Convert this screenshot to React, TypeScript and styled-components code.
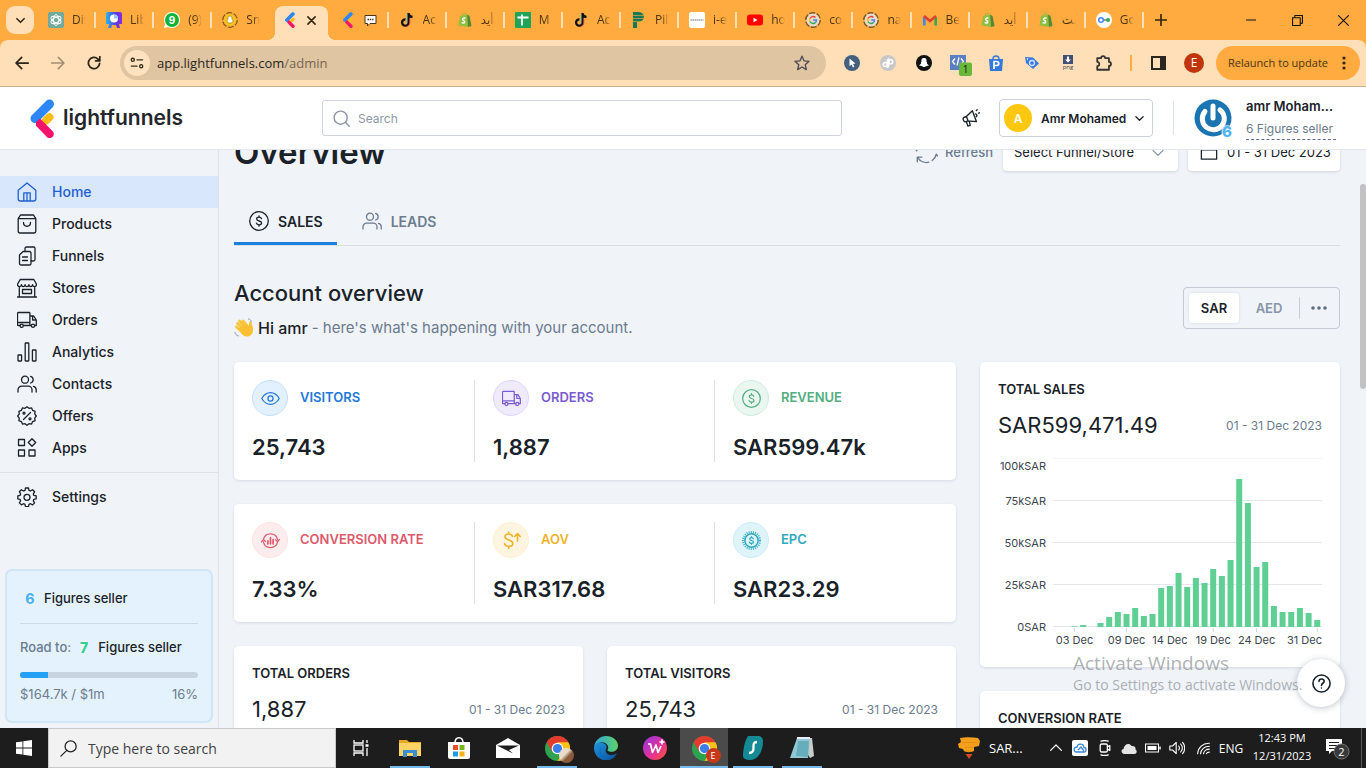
import React from "react";
import styled, { createGlobalStyle, css } from "styled-components";

const uiFont = `Inter, "Liberation Sans", sans-serif`;
const osFont = `"Open Sans", "Noto Sans", "DejaVu Sans", sans-serif`;

const ink = "#1a2229";
const slate = "#6b7c8f";
const line = "#dde2e9";

const GlobalStyle = createGlobalStyle`
  *, *::before, *::after { box-sizing: border-box; }
  html, body { margin: 0; padding: 0; overflow: hidden; }
  body { font-family: ${uiFont}; color: ${ink}; background: #f0f3f8; }
  button, input, select { font: inherit; color: inherit; margin: 0; }
  button { border: 0; background: none; padding: 0; cursor: pointer; }
  a { color: inherit; text-decoration: none; }
  h1, h2, h3, p, ul { margin: 0; padding: 0; }
  ul { list-style: none; }
  svg { display: block; flex: none; }
`;

const Desktop = styled.div`
  position: relative;
  height: 100vh;
  display: flex;
  flex-direction: column;
  overflow: hidden;
`;

/* ---------- Browser chrome ---------- */

const TabStrip = styled.div`
  height: 40px;
  flex: none;
  display: flex;
  align-items: flex-end;
  background: #ffab40;
  font-family: ${osFont};
`;

const TabSearch = styled.button`
  flex: none;
  width: 28px;
  height: 28px;
  margin: 0 4px 6px 6px;
  border-radius: 9px;
  background: #ffdfb8;
  display: grid;
  place-items: center;
`;

const Tabs = styled.ul`
  flex: 1;
  min-width: 0;
  display: flex;
`;

const Tab = styled.li<{ $active?: boolean; $line?: boolean }>`
  position: relative;
  flex: 1 1 0;
  min-width: 0;
  height: 34px;
  padding: 0 10px 6px;
  display: flex;
  align-items: center;
  gap: 8px;
  border-radius: 8px 8px 0 0;
  ${(p) =>
    p.$line &&
    css`
      &::after {
        content: "";
        position: absolute;
        right: 0;
        top: 6px;
        width: 2px;
        height: 16px;
        background: #ffdfb8;
      }
    `}
  ${(p) =>
    p.$active &&
    css`
      flex: 0 0 53px;
      margin: 0 2px 0 5px;
      gap: 12px;
      background: #ffdfb8;
      &::before,
      &::after {
        content: "";
        position: absolute;
        bottom: 0;
        width: 8px;
        height: 8px;
      }
      &::before {
        left: -8px;
        background: radial-gradient(circle at 0 0, transparent 8px, #ffdfb8 8px);
      }
      &::after {
        right: -8px;
        background: radial-gradient(circle at 100% 0, transparent 8px, #ffdfb8 8px);
      }
    `}
`;

const TabTitle = styled.span`
  width: 14px;
  flex: none;
  overflow: hidden;
  white-space: nowrap;
  font-size: 12px;
  line-height: 18px;
  color: #4a3413;
  mask-image: linear-gradient(to right, #000 50%, transparent);
`;

const StripButton = styled.button<{ $w: number }>`
  flex: none;
  width: ${(p) => p.$w}px;
  height: 40px;
  display: grid;
  place-items: center;
`;

const WindowControls = styled.div`
  display: flex;
  margin-left: 50px;
`;

const ToolbarBack = styled.div`
  flex: none;
  background: #ffab40;
`;

const Toolbar = styled.div`
  height: 47px;
  display: flex;
  align-items: center;
  padding: 0 6px 1px 4px;
  background: #ffdfb8;
  border-bottom: 1px solid #c9b18f;
  border-radius: 8px 8px 0 0;
  font-family: ${osFont};
`;

const ToolButton = styled.button`
  flex: none;
  width: 36px;
  height: 34px;
  display: grid;
  place-items: center;
`;

const Omnibox = styled.div`
  flex: 1;
  min-width: 0;
  height: 34px;
  margin: 0 8px;
  padding: 0 16px 0 4px;
  display: flex;
  align-items: center;
  gap: 7px;
  border-radius: 17px;
  background: #dfc5a1;
`;

const SiteInfo = styled.button`
  width: 26px;
  height: 26px;
  border-radius: 50%;
  background: #ffe2bf;
  display: grid;
  place-items: center;
`;

const Url = styled.span`
  flex: 1;
  font-size: 13px;
  line-height: 20px;
  color: #2b2620;
  span {
    color: #75664f;
  }
`;

const ToolDivider = styled.span`
  flex: none;
  width: 2px;
  height: 16px;
  margin: 0 8px;
  background: #ffab40;
`;

const Relaunch = styled.button`
  flex: none;
  height: 34px;
  width: 144px;
  margin-left: 4px;
  padding: 0 14px 0 12px;
  display: flex;
  align-items: center;
  justify-content: space-between;
  border-radius: 17px;
  background: #ffab40;
  font-size: 11px;
  white-space: nowrap;
  color: #4a3413;
`;

/* ---------- App header ---------- */

const Header = styled.header`
  flex: none;
  height: 63px;
  display: flex;
  align-items: center;
  padding: 0 30px;
  background: #fff;
  border-bottom: 1px solid #e2e6ed;
`;

const Logo = styled.a`
  flex: none;
  width: 292px;
  display: flex;
  align-items: center;
  gap: 8px;
  font-size: 21px;
  font-weight: 600;
  line-height: 28px;
  color: #25262b;
`;

const SearchBox = styled.label`
  flex: 0 1 520px;
  height: 36px;
  display: flex;
  align-items: center;
  gap: 6px;
  padding: 0 10px;
  border: 1px solid #cfd3da;
  border-radius: 3px;
  input {
    flex: 1;
    min-width: 0;
    border: 0;
    outline: 0;
    background: none;
    font-size: 12px;
  }
  input::placeholder {
    color: #8d97a8;
    opacity: 1;
  }
`;

const HeaderRight = styled.div`
  flex: none;
  margin-left: auto;
  display: flex;
  align-items: center;
`;

const AnnounceButton = styled.button`
  width: 22px;
  height: 22px;
  display: grid;
  place-items: center;
`;

const AccountButton = styled.button`
  height: 38px;
  width: 154px;
  margin-left: 17px;
  padding: 0 10px 0 4px;
  display: flex;
  align-items: center;
  gap: 9px;
  border: 1px solid #ced3da;
  border-radius: 4px;
  font-size: 12px;
  font-weight: 600;
  white-space: nowrap;
  svg {
    margin-left: auto;
  }
`;

const Initial = styled.span<{ $size: number; $bg: string }>`
  flex: none;
  width: ${(p) => p.$size}px;
  height: ${(p) => p.$size}px;
  border-radius: 50%;
  background: ${(p) => p.$bg};
  color: #fff;
  font-size: 12px;
  display: grid;
  place-items: center;
`;

const HeaderDivider = styled.span`
  width: 1px;
  height: 34px;
  margin: 0 20px;
  background: ${line};
`;

const AvatarWrap = styled.div`
  position: relative;
  width: 38px;
  height: 38px;
`;

const AvatarBadge = styled.span`
  position: absolute;
  right: 0;
  bottom: -4px;
  font-size: 15px;
  line-height: 18px;
  font-weight: 800;
  color: #4db5f5;
  text-shadow: 0 0 2px #fff, 0 0 2px #fff, 0 0 2px #fff;
`;

const Person = styled.div`
  width: 90px;
  margin-left: 14px;
`;

const PersonName = styled.p`
  font-size: 13px;
  font-weight: 600;
  line-height: 18px;
  white-space: nowrap;
`;

const PersonPlan = styled.a`
  display: block;
  margin-top: 4px;
  font-size: 12px;
  line-height: 20px;
  color: ${slate};
  white-space: nowrap;
  border-bottom: 1px dashed #5d6d92;
`;

/* ---------- Sidebar ---------- */

const Body = styled.div`
  position: relative;
  flex: 1;
  min-height: 0;
  display: flex;
  background: #f0f3f8;
`;

const Sidebar = styled.aside`
  flex: none;
  width: 219px;
  padding-top: 26px;
  display: flex;
  flex-direction: column;
  border-right: 1px solid ${line};
`;

const NavLink = styled.a<{ $active?: boolean }>`
  height: 32px;
  padding-left: 17px;
  display: flex;
  align-items: center;
  gap: 15px;
  font-size: 14px;
  font-weight: 500;
  color: ${(p) => (p.$active ? "#1f5fd0" : ink)};
  background: ${(p) => (p.$active ? "#d8e7fb" : "none")};
`;

const Label = styled.span`
  padding-bottom: 2px;
`;

const NavRule = styled.hr`
  width: 100%;
  margin: 8px 0;
  border: 0;
  border-top: 1px solid ${line};
`;

const PlanCard = styled.section`
  margin: auto 5px 5px;
  height: 154px;
  padding: 17px 13px 0;
  border: 2px solid #cfe6f6;
  border-radius: 7px;
  background: #e3f2fd;
  font-size: 13px;
`;

const PlanRow = styled.div`
  display: flex;
  align-items: center;
  height: 20px;
  font-weight: 500;
  color: ${ink};
  white-space: nowrap;
  span {
    color: ${slate};
  }
`;

const PlanRule = styled.hr`
  margin: 15px 0 13px;
  border: 0;
  border-top: 1px solid #c9dae8;
`;

const Digit = styled.b<{ $color: string; $left?: number }>`
  flex: none;
  width: 20px;
  margin: 0 4px 0 ${(p) => p.$left ?? 0}px;
  text-align: center;
  font-size: 14px;
  font-weight: 800;
  color: ${(p) => p.$color};
  text-shadow: 0 0 3px #fff;
`;

const Meter = styled.div`
  height: 6px;
  margin: 15px 0 6px;
  border-radius: 3px;
  background: #c8d5e0;
  overflow: hidden;
`;

const MeterFill = styled.div`
  height: 100%;
  background: #24a1f4;
`;

const PlanFoot = styled.div`
  display: flex;
  justify-content: space-between;
  line-height: 20px;
  color: ${slate};
`;

/* ---------- Main column ---------- */

const Main = styled.main`
  flex: 1;
  min-width: 0;
  padding: 0 26px 0 15px;
  overflow: hidden;
`;

const TitleRow = styled.div`
  height: 38px;
  margin-top: -17px;
  display: flex;
  align-items: center;
  gap: 10px;
  h1 {
    flex: 1;
    font-size: 33px;
    line-height: 38px;
    font-weight: 600;
  }
`;

const RefreshButton = styled.button`
  display: flex;
  align-items: center;
  gap: 7px;
  font-size: 13px;
  font-weight: 500;
  color: ${slate};
`;

const raised = css`
  background: #fff;
  border-radius: 4px;
  box-shadow: 0 1px 3px rgba(40, 55, 80, 0.16);
`;

const StorePicker = styled.label`
  ${raised}
  position: relative;
  width: 175px;
  height: 38px;
  select {
    width: 100%;
    height: 38px;
    padding: 0 11px;
    border: 0;
    background: none;
    appearance: none;
    font-size: 13px;
  }
  svg {
    position: absolute;
    right: 14px;
    top: 14px;
    pointer-events: none;
  }
`;

const DateButton = styled.button`
  ${raised}
  width: 152px;
  height: 38px;
  padding: 0 12px;
  display: flex;
  align-items: center;
  gap: 9px;
  font-size: 13px;
  white-space: nowrap;
`;

const ViewTabs = styled.div`
  margin-top: 29px;
  display: flex;
  gap: 10px;
  border-bottom: 1px solid #d9dfe6;
`;

const ViewTab = styled.button<{ $active?: boolean }>`
  height: 45px;
  padding: 0 14px 0 15px;
  display: flex;
  align-items: center;
  gap: 9px;
  font-size: 14px;
  font-weight: 600;
  border-bottom: 3px solid ${(p) => (p.$active ? "#1b7fe0" : "transparent")};
  color: ${(p) => (p.$active ? ink : slate)};
`;

const IntroRow = styled.div`
  margin: 32px 0 24px;
  display: flex;
  align-items: center;
  justify-content: space-between;
`;

const IntroTitle = styled.h2`
  font-size: 22px;
  font-weight: 500;
  line-height: 30px;
`;

const Greeting = styled.p`
  margin-top: 10px;
  display: flex;
  align-items: center;
  gap: 4px;
  font-size: 15px;
  line-height: 20px;
  color: ${slate};
  strong {
    font-size: 16px;
    font-weight: 500;
    color: ${ink};
  }
`;

const Currency = styled.div`
  height: 42px;
  width: 157px;
  padding: 5px 1px 5px 5px;
  display: flex;
  align-items: center;
  border: 1px solid #c3cad3;
  border-radius: 4px;
`;

const CurrencyButton = styled.button<{ $active?: boolean }>`
  width: ${(p) => (p.$active ? 50 : 60)}px;
  height: 30px;
  padding-bottom: 1px;
  border-radius: 4px;
  font-size: 13px;
  font-weight: 600;
  color: ${(p) => (p.$active ? ink : "#8795a6")};
  background: ${(p) => (p.$active ? "#fff" : "none")};
  box-shadow: ${(p) => (p.$active ? "0 0 3px rgba(40,55,80,.12)" : "none")};
`;

const MoreButton = styled.button`
  flex: 1;
  height: 22px;
  display: grid;
  place-items: center;
  border-left: 1px solid #c6cdd6;
`;

const Board = styled.div`
  display: grid;
  grid-template-columns: minmax(0, 1fr) 360px;
  gap: 24px;
  align-items: start;
`;

const Column = styled.div`
  display: grid;
  gap: 24px;
`;

const Pair = styled.div`
  display: grid;
  grid-template-columns: 1fr 1fr;
  gap: 24px;
`;

const Card = styled.section`
  background: #fff;
  border-radius: 5px;
  box-shadow: 0 1px 3px rgba(40, 55, 80, 0.13);
  padding: 18px;
  min-height: 118px;
`;

const StatCard = styled(Card)`
  display: grid;
  grid-template-columns: repeat(3, 1fr);
  padding: 18px 2px 18px 0;
`;

const Stat = styled.div`
  padding-left: 18px;
  & + & {
    border-left: 1px solid #dce0e5;
  }
`;

const StatHead = styled.h3<{ $color: string }>`
  display: flex;
  align-items: center;
  gap: 12px;
  font-size: 13px;
  font-weight: 600;
  color: ${(p) => p.$color};
`;

const StatIcon = styled.span<{ $bg: string; $edge: string }>`
  width: 36px;
  height: 36px;
  border-radius: 50%;
  display: grid;
  place-items: center;
  background: ${(p) => p.$bg};
  border: 1px solid ${(p) => p.$edge};
`;

const StatValue = styled.p`
  margin-top: 16px;
  font-size: 22px;
  line-height: 30px;
  font-weight: 600;
`;

const CardTitle = styled.h3`
  font-size: 13px;
  line-height: 18px;
  font-weight: 600;
`;

const CardFigures = styled.div`
  margin-top: 12px;
  display: flex;
  align-items: center;
  justify-content: space-between;
  font-size: 12px;
  color: ${slate};
  strong {
    font-size: 22px;
    line-height: 30px;
    font-weight: 400;
    color: ${ink};
  }
`;

const Chart = styled.svg`
  width: 100%;
  margin-top: 10px;
  font-size: 11px;
  fill: #3c4650;
`;

const ScrollThumb = styled.div`
  position: absolute;
  right: 0;
  top: 34px;
  width: 6px;
  height: 205px;
  border-radius: 3px;
  background: #c0c2c4;
`;

const Watermark = styled.div`
  position: absolute;
  right: 57px;
  bottom: 33px;
  width: 236px;
  font-family: ${osFont};
  color: rgba(140, 143, 150, 0.7);
  pointer-events: none;
  white-space: nowrap;
  p {
    font-size: 19px;
    line-height: 24px;
  }
  p + p {
    font-size: 14px;
    line-height: 20px;
  }
`;

const HelpButton = styled.button`
  position: absolute;
  right: 21px;
  bottom: 21px;
  width: 48px;
  height: 48px;
  border-radius: 50%;
  background: #fff;
  box-shadow: 0 1px 6px rgba(40, 55, 80, 0.3);
  display: grid;
  place-items: center;
`;

/* ---------- Taskbar ---------- */

const Taskbar = styled.footer`
  flex: none;
  height: 40px;
  display: flex;
  background: #1d1d1d;
  color: #fff;
  font-family: ${osFont};
`;

const StartButton = styled.button`
  width: 48px;
  display: grid;
  place-items: center;
`;

const TaskSearch = styled.label`
  width: 288px;
  padding-left: 11px;
  display: flex;
  align-items: center;
  gap: 9px;
  background: #f2f2f2;
  border: 1px solid #c9c9c9;
  input {
    flex: 1;
    min-width: 0;
    border: 0;
    outline: 0;
    background: none;
    font-size: 14px;
  }
  input::placeholder {
    color: #424242;
    opacity: 1;
  }
`;

const TaskApps = styled.div`
  display: flex;
  gap: 1px;
  padding-left: 1px;
`;

const TaskButton = styled.button<{ $active?: boolean; $running?: boolean }>`
  position: relative;
  width: 48px;
  display: grid;
  place-items: center;
  background: ${(p) => (p.$active ? "#4b4b4b" : "none")};
  &::after {
    content: "";
    position: absolute;
    bottom: 0;
    left: ${(p) => (p.$active ? 0 : 4)}px;
    right: ${(p) => (p.$active ? 0 : 4)}px;
    height: 2px;
    background: ${(p) => (p.$running ? "#76b9ed" : "none")};
  }
`;

const Tray = styled.div`
  margin-left: auto;
  display: flex;
  align-items: center;
  font-size: 12px;
`;

const NewsButton = styled.button`
  width: 88px;
  display: flex;
  align-items: center;
  gap: 8px;
  font-size: 13px;
`;

const TrayIcon = styled.button<{ $w?: number }>`
  width: ${(p) => p.$w ?? 24}px;
  height: 40px;
  display: grid;
  place-items: center;
`;

const Clock = styled.time`
  width: 74px;
  text-align: center;
  font-size: 11px;
  line-height: 18px;
  padding-bottom: 2px;
`;

const ShowDesktop = styled.span`
  width: 5px;
  height: 40px;
  border-left: 1px solid #5b5b5b;
`;

/* ---------- Drawings ---------- */

type IconProps = { s?: number; w?: number; color?: string; children?: React.ReactNode };

const Icon = ({ s = 20, w = 1.3, color = "currentColor", children }: IconProps) => (
  <svg
    width={s}
    height={s}
    viewBox="0 0 20 20"
    fill="none"
    stroke={color}
    strokeWidth={w}
    strokeLinecap="round"
    strokeLinejoin="round"
    aria-hidden="true"
  >
    {children}
  </svg>
);

const Truck = () => (
  <>
    <path d="M3 15.500H1.200a.7.7 0 0 1-.7-.7V3.200a.7.7 0 0 1 .7-.7h11a.7.7 0 0 1 .7.7v12.300H6.500M.5 12.500h12.400M12.900 6h3.800l2.600 4v5.500h-1.500M14.300 15.500h-1.400M15.600 6v4h3.700" />
    <circle cx="4.700" cy="15.800" r="1.600" />
    <circle cx="16" cy="15.800" r="1.600" />
  </>
);

const Coin = () => (
  <>
    <circle cx="10" cy="10" r="9.300" />
    <path d="M12.500 7.700c-.3-1-1.200-1.500-2.500-1.500s-2.400.6-2.400 1.800c0 2.700 5 1.300 5 4 0 1.200-1.100 1.800-2.500 1.800s-2.400-.5-2.700-1.600M10 4.800v1.400M10 13.800v1.400" />
  </>
);

const People = () => (
  <>
    <circle cx="8" cy="5.700" r="3.500" />
    <path d="M1 18v-2.200c0-2 1.700-3.600 3.700-3.600h6.600c2 0 3.700 1.600 3.700 3.600V18M13.600 2.400c3.400 1 3.400 5.600 0 6.600M16.500 12.400c1.700.4 2.700 1.700 2.700 3.400V18" />
  </>
);

const gear =
  "M8.500 1h3l.5 2.300 1.500.7 2.100-1.300 2 2.100-1.300 2.100.6 1.500 2.300.5v2.900l-2.300.5-.6 1.500 1.300 2.100-2 2-2.100-1.200-1.500.6-.5 2.300h-3L8 17.300l-1.500-.6-2.100 1.200-2-2 1.200-2.100L3 12.300l-2.200-.5V8.900L3 8.400l.6-1.500-1.200-2.100 2-2.100L6.500 4 8 3.300z";

const scallop =
  "M10 .8l2 1.500 2.600-.4 1 2.400 2.500 1-.4 2.500L19.300 10l-1.600 2.100.4 2.500-2.500 1-1 2.500-2.600-.4-2 1.600-2-1.600-2.600.4-1-2.500-2.500-1 .4-2.500L.7 10l1.600-2.200-.4-2.500 2.500-1 1-2.400L8 2.300z";

const navItems: { label: string; icon: React.ReactNode }[] = [
  {
    label: "Home",
    icon: <path d="M1.200 8.200L10 1l8.800 7.200v8.500a2.300 2.300 0 0 1-2.300 2.300h-13a2.300 2.300 0 0 1-2.300-2.300zM6.800 19v-8.200h6.400V19M10 10.800V19" />,
  },
  {
    label: "Products",
    icon: (
      <>
        <path d="M1.200 4.700h17.600v12.500a1.800 1.800 0 0 1-1.800 1.800H3a1.800 1.800 0 0 1-1.800-1.800zM1.200 4.700L3.500 1h13l2.300 3.700" />
        <path d="M6.500 8.500c0 5 7 5 7 0" />
      </>
    ),
  },
  {
    label: "Funnels",
    icon: (
      <>
        <path d="M8 5.500v-3A1.500 1.500 0 0 1 9.500 1h7A1.500 1.500 0 0 1 18 2.500v11a1.500 1.500 0 0 1-1.500 1.500H14" />
        <path d="M6 5.500h6.500A1.500 1.500 0 0 1 14 7v10.500a1.500 1.500 0 0 1-1.500 1.500H4a1.500 1.500 0 0 1-1.500-1.500V9zM5.500 11h5M5.500 14.500h5" />
      </>
    ),
  },
  {
    label: "Stores",
    icon: (
      <>
        <path d="M3.200 1.500h13.600l2.700 4.800c0 3-3.900 3-3.900.3 0 2.700-3.700 2.700-3.700 0 0 2.700-3.800 2.700-3.800 0 0 2.700-3.700 2.700-3.700 0 0 2.700-3.900 2.700-3.900-.3zM2.300 9v10M17.700 9v10M.5 19h19" />
        <rect x="5.500" y="11.500" width="9" height="4" />
      </>
    ),
  },
  { label: "Orders", icon: <Truck /> },
  {
    label: "Analytics",
    icon: (
      <>
        <rect x="1" y="13" width="3.600" height="6" rx=".5" />
        <rect x="8.200" y="1" width="3.600" height="18" rx=".5" />
        <rect x="15.400" y="8" width="3.600" height="11" rx=".5" />
      </>
    ),
  },
  { label: "Contacts", icon: <People /> },
  {
    label: "Offers",
    icon: (
      <>
        <path d={scallop} />
        <path d="M6.500 13.500l7-7" />
        <circle cx="7" cy="7.200" r="1" />
        <circle cx="13" cy="12.800" r="1" />
      </>
    ),
  },
  {
    label: "Apps",
    icon: (
      <>
        <rect x="1.500" y="1.500" width="6" height="6" />
        <rect x="1.500" y="12" width="6" height="6" />
        <rect x="12" y="12" width="6" height="6" />
        <path d="M15 .8l3.700 3.700L15 8.200l-3.700-3.700z" />
      </>
    ),
  },
];

const Chevron = ({ s = 10, color = "currentColor", w = 2.5 }: { s?: number; color?: string; w?: number }) => (
  <Icon s={s} w={w} color={color}>
    <path d="M2 6l8 8 8-8" />
  </Icon>
);

const FunnelMark = ({ w, h }: { w: number; h: number }) => (
  <svg width={w} height={h} viewBox="0 0 24 39" strokeLinecap="round" aria-hidden="true">
    <path d="M4.500 19.500L19 5" stroke="#2f86f6" strokeWidth="9" />
    <path d="M15.500 21.500l3.500-3.300" stroke="#fbbc14" strokeWidth="8" />
    <path d="M5.500 23l4-3.500 12.500 12.400a4 4 0 0 1-5.600 6.100L5.300 26.500z" fill="#f5136c" />
  </svg>
);

const Shopify = () => (
  <svg width="16" height="16" viewBox="0 0 16 16" aria-hidden="true">
    <path d="M3 4l7-1.500L11 15 1.500 13.500z" fill="#8fbf3f" />
    <path d="M10 2.500l2.500 1.500L14.500 14l-3.500 1z" fill="#4f8a34" />
    <path d="M5 4c.3-2 1.600-3.300 3-2.800.8.300 1 1 1 2" fill="none" stroke="#8fbf3f" />
    <path d="M8.500 6.300c-1.600-.7-3-.2-3 1s2.300 1.200 2.200 2.700c-.1 1.200-1.700 1.400-3 .5" fill="none" stroke="#fff" strokeWidth="1.500" />
  </svg>
);

const TikTok = () => (
  <svg width="16" height="16" viewBox="0 0 16 16" fill="none" strokeWidth="2.300" aria-hidden="true">
    <path d="M9.500 1v9.500a3.200 3.200 0 1 1-3-3.200M9.500 1.500c.3 2.200 1.800 3.300 4 3.500" stroke="#111" />
    <path d="M8 2v8.500a2 2 0 0 1-1 2" stroke="#3ad0d8" strokeWidth=".7" />
    <path d="M10.800 6.500v4.500a4 4 0 0 1-3 3.600" stroke="#e8365b" strokeWidth=".8" />
  </svg>
);

const GoogleRing = () => (
  <svg width="16" height="16" viewBox="0 0 16 16" fill="none" aria-hidden="true">
    <circle cx="8" cy="8" r="6.700" fill="#e6dccb" />
    <circle cx="8" cy="8" r="7.300" stroke="#7d5a2a" strokeDasharray="6 1.600" strokeWidth="1.400" />
    <path d="M10.500 5.600A3.500 3.500 0 0 0 5 6.300" stroke="#ea4335" strokeWidth="1.400" />
    <path d="M5 6.300a3.500 3.500 0 0 0 0 3.400" stroke="#fbbc05" strokeWidth="1.400" />
    <path d="M5 9.700a3.500 3.500 0 0 0 5.300.9" stroke="#34a853" strokeWidth="1.400" />
    <path d="M10.300 10.600A3.500 3.500 0 0 0 11.500 8H8.200" stroke="#4285f4" strokeWidth="1.400" />
  </svg>
);

const fav = {
  gpt: (
    <svg width="16" height="16" viewBox="0 0 16 16" aria-hidden="true">
      <rect width="16" height="16" rx="2" fill="#74aa9c" />
      <g fill="none" stroke="#fff" strokeWidth=".9">
        <ellipse cx="8" cy="8" rx="2.600" ry="5.500" />
        <ellipse cx="8" cy="8" rx="2.600" ry="5.500" transform="rotate(60 8 8)" />
        <ellipse cx="8" cy="8" rx="2.600" ry="5.500" transform="rotate(120 8 8)" />
      </g>
    </svg>
  ),
  lil: (
    <svg width="16" height="16" viewBox="0 0 16 16" aria-hidden="true">
      <defs>
        <linearGradient id="lil" x1="0" x2="1">
          <stop stopColor="#24b8e8" />
          <stop offset=".6" stopColor="#5a3be0" />
          <stop offset="1" stopColor="#8a2be0" />
        </linearGradient>
      </defs>
      <path d="M2 0h12a2 2 0 0 1 2 2v10h-3l1 4h-3l-1-3H6l-1 3H2l1-4H0V2a2 2 0 0 1 2-2z" fill="url(#lil)" />
      <circle cx="8" cy="6.500" r="4" fill="#fff" />
      <path d="M8 6.500V2.500a4 4 0 0 1 4 4z" fill="#8fc7ff" />
    </svg>
  ),
  whatsapp: (
    <svg width="16" height="16" viewBox="0 0 16 16" aria-hidden="true">
      <path d="M0 16l1.100-4A8 8 0 1 1 4 14.900z" fill="#fff" />
      <circle cx="8" cy="8" r="7" fill="#12b33d" />
      <text x="8" y="11.500" textAnchor="middle" fontFamily="Inter" fontWeight="700" fontSize="10" fill="#fff">9</text>
    </svg>
  ),
  snap: (
    <svg width="16" height="16" viewBox="0 0 16 16" aria-hidden="true">
      <circle cx="8" cy="8" r="7.300" fill="none" stroke="#7d5a10" strokeDasharray="6 1.600" strokeWidth="1.200" />
      <circle cx="8" cy="8" r="5.800" fill="#f5c518" />
      <path d="M8 4c2.200 0 2 2 2 3.200L11.300 9 9.500 11h-3L4.700 9 6 7.200C6 6 5.800 4 8 4z" fill="#fff" stroke="#8a6a12" strokeWidth=".6" />
    </svg>
  ),
  sheets: (
    <svg width="16" height="16" viewBox="0 0 16 16" aria-hidden="true">
      <rect width="16" height="16" rx="1" fill="#1fa55a" />
      <path d="M2.500 5.500h11M7 2.500v11" stroke="#fff" strokeWidth="1.800" />
    </svg>
  ),
  pil: (
    <svg width="16" height="16" viewBox="0 0 16 16" aria-hidden="true">
      <path d="M2 0h6c6 0 7 9 0 10H6v6H2z" fill="#177a55" />
      <path d="M2 3.500h12M2 6.500h12M2 9.500h9" stroke="#ffab40" strokeWidth=".6" />
    </svg>
  ),
  ie: (
    <svg width="16" height="16" viewBox="0 0 16 16" aria-hidden="true">
      <rect width="16" height="16" rx="2" fill="#fff" />
      <path d="M1.500 8h13" stroke="#9a9ea8" strokeWidth="1.600" strokeDasharray="1.500 .5" />
    </svg>
  ),
  youtube: (
    <svg width="16" height="16" viewBox="0 0 16 16" aria-hidden="true">
      <rect y="2.500" width="16" height="11" rx="3" fill="#f00" />
      <path d="M6.500 5.700l4 2.300-4 2.300z" fill="#fff" />
    </svg>
  ),
  gmail: (
    <svg width="16" height="16" viewBox="0 0 16 16" fill="none" strokeWidth="2.600" aria-hidden="true">
      <path d="M2.300 13.500V5" stroke="#4285f4" />
      <path d="M13.700 13.500V5" stroke="#34a853" />
      <path d="M2 4l6 5 6-5" stroke="#e0402f" />
    </svg>
  ),
  key: (
    <svg width="16" height="16" viewBox="0 0 16 16" aria-hidden="true">
      <circle cx="8" cy="8" r="8" fill="#fff" />
      <circle cx="5" cy="8" r="2.300" fill="none" stroke="#4285f4" strokeWidth="1.500" />
      <path d="M8 8h3" stroke="#777" strokeWidth="1.500" />
      <circle cx="12" cy="8" r="2" fill="#34a853" />
    </svg>
  ),
};

const tabs: { icon: React.ReactNode; title: string; line?: boolean }[] = [
  { icon: fav.gpt, title: "Dis", line: true },
  { icon: fav.lil, title: "Lib", line: true },
  { icon: fav.whatsapp, title: "(9)", line: true },
  { icon: fav.snap, title: "Sn" },
];

const tabsAfter: { icon: React.ReactNode; title: string }[] = [
  { icon: <TikTok />, title: "Ac" },
  { icon: <Shopify />, title: "أيد" },
  { icon: fav.sheets, title: "M" },
  { icon: <TikTok />, title: "Ac" },
  { icon: fav.pil, title: "Pil" },
  { icon: fav.ie, title: "i-e" },
  { icon: fav.youtube, title: "ho" },
  { icon: <GoogleRing />, title: "co" },
  { icon: <GoogleRing />, title: "na" },
  { icon: fav.gmail, title: "Be" },
  { icon: <Shopify />, title: "أيد" },
  { icon: <Shopify />, title: "مت" },
  { icon: fav.key, title: "Go" },
];

const extensions: { label: string; icon: React.ReactNode }[] = [
  {
    label: "Pointer",
    icon: (
      <svg width="16" height="16" viewBox="0 0 16 16">
        <circle cx="8" cy="8" r="8" fill="#46607f" />
        <path d="M5.500 3.500l6 5-2.500.4 1.300 2.800-1.400.7-1.300-2.900-2.100 1.700z" fill="#fff" />
      </svg>
    ),
  },
  {
    label: "Link",
    icon: (
      <svg width="16" height="16" viewBox="0 0 16 16">
        <circle cx="8" cy="8" r="8" fill="#c9c8c6" />
        <g fill="none" stroke="#fff" strokeWidth="1.600">
          <circle cx="5.300" cy="9.500" r="2" />
          <path d="M7.300 9.500V6.500c0-2 1-2.500 2-2.500" />
          <circle cx="10.700" cy="6.700" r="2" />
          <path d="M8.700 7v3c0 1.500-1 2.300-2 2.300" />
        </g>
      </svg>
    ),
  },
  {
    label: "Snapchat",
    icon: (
      <svg width="16" height="16" viewBox="0 0 16 16">
        <circle cx="8" cy="8" r="8" fill="#111" />
        <path d="M8 3c2.600 0 2.700 2 2.500 4 .5 0 1 .3.300.9.300 1.200 1 1.700 2 2.100-.3.800-1.200.7-1.500.8-.2.700-1.200.2-1.800.7-.9.700-2.100.7-3 0-.6-.5-1.600 0-1.800-.7-.3-.1-1.200 0-1.500-.8 1-.4 1.700-.9 2-2.100-.7-.6-.2-.9.300-.9-.2-2-.1-4 2.500-4z" fill="#fff" />
      </svg>
    ),
  },
  {
    label: "Code",
    icon: (
      <svg width="26" height="26" viewBox="0 0 26 26">
        <rect x="3" y="5" width="16" height="15" fill="#5b7fc4" />
        <path d="M8 8.500L5.500 11.500 8 14.500M12 7.500l-2 8M14 8.500l2.500 3-2.500 3" fill="none" stroke="#fff" strokeWidth="1.300" />
        <rect x="12" y="12.500" width="13" height="13.500" rx="2" fill="#6ab83a" />
        <text x="18.500" y="23" textAnchor="middle" fontSize="10" fill="#1a1a1a" fontFamily="Open Sans">1</text>
      </svg>
    ),
  },
  {
    label: "Shopping",
    icon: (
      <svg width="16" height="16" viewBox="0 0 16 16">
        <path d="M1 4h14l-1 12H2z" fill="#3478dd" />
        <path d="M5 4c0-4 6-4 6 0" fill="none" stroke="#3478dd" strokeWidth="1.400" />
        <path d="M6 14V6.500h2.500c3 0 3 4 0 4H6" fill="none" stroke="#fff" strokeWidth="1.700" />
      </svg>
    ),
  },
  {
    label: "Tag",
    icon: (
      <svg width="16" height="16" viewBox="0 0 16 16">
        <path d="M1 2l8 .5 6 6-6 5.500-7-6z" fill="#3a7ae0" />
        <circle cx="8" cy="8" r="2.500" fill="none" stroke="#cfe2ff" strokeWidth="1.300" />
        <circle cx="3.500" cy="4" r=".8" fill="#fff" />
      </svg>
    ),
  },
  {
    label: "Save image",
    icon: (
      <svg width="12" height="16" viewBox="0 0 12 16">
        <rect x="1" width="10" height="9" fill="#3f4f77" />
        <path d="M5 1.500h2v3h2L6 7.500 3 4.500h2z" fill="#fff" />
        <text x="6" y="14" textAnchor="middle" fontSize="6" fill="#39425c" fontFamily="Open Sans">png</text>
      </svg>
    ),
  },
  {
    label: "Extensions",
    icon: (
      <Icon s={18} w={2} color="#333">
        <path d="M2.500 4.500h4.300c0-3 4.400-3 4.400 0h4.300v4.300c3 0 3 4.400 0 4.400v4.300h-13v-4c3 0 3-4.800 0-4.800z" />
      </Icon>
    ),
  },
];

type StatDef = { label: string; value: string; color: string; bg: string; edge: string; icon: React.ReactNode };

const stats: StatDef[][] = [
  [
    {
      label: "VISITORS", value: "25,743", color: "#2379d8", bg: "#e2f1fd", edge: "#c3e0f8",
      icon: (
        <>
          <path d="M.8 10C5.500 1.800 14.500 1.800 19.200 10 14.500 18.200 5.500 18.200.8 10z" />
          <circle cx="10" cy="10" r="2.700" />
        </>
      ),
    },
    { label: "ORDERS", value: "1,887", color: "#7a5bd0", bg: "#efebfc", edge: "#ded5f8", icon: <Truck /> },
    { label: "REVENUE", value: "SAR599.47k", color: "#54ae80", bg: "#e9f7f0", edge: "#d0ebdd", icon: <Coin /> },
  ],
  [
    {
      label: "CONVERSION RATE", value: "7.33%", color: "#dd5a6c", bg: "#fdecee", edge: "#fbe3e6",
      icon: (
        <>
          <path d="M2.500 9A7.700 7.700 0 0 1 17.500 9M17.500 11.500A7.700 7.700 0 0 1 2.500 11.500M.5 11.500l2-2.500 2.300 2M19.500 8.800l-2 2.500-2.300-2" />
          <path d="M7.300 13.500v-3M10 13.500V7M12.700 13.500V9" strokeWidth="1.800" />
        </>
      ),
    },
    {
      label: "AOV", value: "SAR317.68", color: "#eeb42c", bg: "#fef5e1", edge: "#fdf0d2",
      icon: (
        <path
          d="M11 5.500C10.500 3.900 9 3.200 6.900 3.200c-2.200 0-3.800 1-3.800 2.900 0 4.300 8.300 2.500 8.300 7 0 2-1.900 3-4.300 3-2.300 0-4-1-4.400-2.800M7 1v2.200M7 16.100v2.200M16.300 10.500V3M13.300 5.800L16.300 2.800l3 3"
          strokeWidth="1.700"
        />
      ),
    },
    {
      label: "EPC", value: "SAR23.29", color: "#2fa9bd", bg: "#def4f9", edge: "#cbecf4",
      icon: (
        <>
          <circle cx="10" cy="10" r="9" strokeWidth="2" strokeDasharray="1 1.300" strokeLinecap="butt" />
          <circle cx="10" cy="10" r="7" strokeWidth="1.600" />
          <path d="M12 8.200c-.4-1.600-3.900-1.600-3.900.2 0 2 4 1.200 4 3.200 0 1.800-3.700 1.800-4.200.2M10 6v1M10 13v1" />
        </>
      ),
    },
  ],
];

/* Daily sales for 3-31 December, as bar heights in chart units. */
const dailySales = [
  0.7, 2, 0, 4, 10, 15, 13, 19, 11, 13, 39, 41, 54, 40, 49, 44, 58, 51, 67, 148, 124, 60, 65, 21, 15, 15, 19, 14, 7,
];
const yTicks: [string, number, number][] = [
  ["100kSAR", 9, 20],
  ["75kSAR", 51, 55],
  ["50kSAR", 93, 97],
  ["25kSAR", 135, 139],
  ["0SAR", 177, 181],
];
const xTicks: [string, number][] = [
  ["03 Dec", 3],
  ["09 Dec", 9],
  ["14 Dec", 14],
  ["19 Dec", 19],
  ["24 Dec", 24],
  ["31 Dec", 31],
];
const dayX = (day: number) => 76.5 + (day - 3) * 8.67;

const SalesChart = () => (
  <Chart viewBox="0 0 324 199" role="img" aria-label="Total sales per day">
    {yTicks.map(([label, y, textY]) => (
      <g key={label}>
        <path d={`M55 ${y - 0.5}H324`} stroke={y === 9 ? "#f4f5f6" : "#e4e7ea"} />
        <text x="48" y={textY} textAnchor="end">{label}</text>
      </g>
    ))}
    {dailySales.map((h, i) => (
      <rect key={i} x={dayX(i + 3) - 3} y={177 - h} width="6" height={h} fill="#5fcf94" />
    ))}
    {xTicks.map(([label, day]) => (
      <g key={label}>
        <path d={`M${dayX(day)} 178v4`} stroke="#cfd5da" />
        <text x={day === 31 ? 324 : dayX(day)} y="194" textAnchor={day === 31 ? "end" : "middle"}>{label}</text>
      </g>
    ))}
  </Chart>
);

const Chrome = () => (
  <svg width="25" height="25" viewBox="0 0 24 24" aria-hidden="true">
    <circle cx="12" cy="12" r="12" fill="#2fa24f" />
    <path d="M1.600 6A12 12 0 0 1 22.400 6L12 12z" fill="#e33b2e" />
    <path d="M22.400 6A12 12 0 0 1 12 24l5.200-9L12 6z" fill="#fbc116" />
    <path d="M1.600 6h20.800H12L6.800 15z" fill="#e33b2e" />
    <circle cx="12" cy="12" r="5.600" fill="#fff" />
    <circle cx="12" cy="12" r="4.400" fill="#3b7de9" />
  </svg>
);

const ChromeWrap = styled.span`
  position: relative;
  display: block;
`;

const ChromeUser = styled.span<{ $bg: string }>`
  position: absolute;
  right: -4px;
  bottom: -2px;
  width: 15px;
  height: 15px;
  border-radius: 50%;
  background: ${(p) => p.$bg};
  color: #fff;
  font-size: 9px;
  line-height: 15px;
  text-align: center;
`;

const taskApps: { label: string; running?: boolean; active?: boolean; icon: React.ReactNode }[] = [
  {
    label: "Task view",
    icon: (
      <svg width="18" height="16" viewBox="0 0 18 16" fill="none" stroke="#fff" strokeWidth="1.300">
        <path d="M2 0v3h9V0M2 16v-3h9v3" />
        <rect x="2" y="5" width="9" height="6" />
        <path d="M15 0v3M15 8v8" />
        <path d="M13.500 5.500h3" strokeWidth="2.500" />
      </svg>
    ),
  },
  {
    label: "File Explorer",
    running: true,
    icon: (
      <svg width="22" height="18" viewBox="0 0 22 18">
        <path d="M0 1h8l2 2h12v14H0z" fill="#e8a825" />
        <rect y="4" width="22" height="13" fill="#fcd364" />
        <path d="M4 18v-7h14v7h-4v-4H8v4z" fill="#3b8fd0" />
      </svg>
    ),
  },
  {
    label: "Microsoft Store",
    icon: (
      <svg width="24" height="24" viewBox="0 0 24 24">
        <path d="M8 7c0-7 8-7 8 0" fill="none" stroke="#fff" strokeWidth="1.500" />
        <path d="M1 6h22v15a2 2 0 0 1-2 2H3a2 2 0 0 1-2-2z" fill="#fff" />
        <rect x="6" y="9" width="5" height="5" fill="#e8502c" />
        <rect x="12.500" y="9" width="5" height="5" fill="#7ab51d" />
        <rect x="6" y="15.500" width="5" height="5" fill="#1c9be0" />
        <rect x="12.500" y="15.500" width="5" height="5" fill="#fbb514" />
      </svg>
    ),
  },
  {
    label: "Mail",
    icon: (
      <svg width="24" height="20" viewBox="0 0 24 20">
        <path d="M0 7l12-7 12 7v13H0z" fill="#fff" />
        <path d="M1 7.500h22l-10 4.500 4 3.500z" fill="#1d1d1d" />
      </svg>
    ),
  },
  {
    label: "Chrome",
    running: true,
    icon: (
      <ChromeWrap>
        <Chrome />
        <ChromeUser $bg="linear-gradient(135deg, #e8dccb 40%, #8a5a3a 60%)" />
      </ChromeWrap>
    ),
  },
  {
    label: "Edge",
    icon: (
      <svg width="24" height="24" viewBox="0 0 24 24">
        <defs>
          <linearGradient id="edgeTop" x1="0" x2="1">
            <stop stopColor="#2aa5e0" />
            <stop offset="1" stopColor="#5fd068" />
          </linearGradient>
          <linearGradient id="edgeBase" x1="0" x2="1" y2="1">
            <stop stopColor="#1e96dc" />
            <stop offset="1" stopColor="#0d4f9e" />
          </linearGradient>
        </defs>
        <path d="M0 12C0 8 5 5.500 9 7c3 1 4 3 3.500 5-2 2-.5 6.500 3.500 7 2 .2 4-.3 5.800-1.300.5-.3.900.2.600.7A12 12 0 0 1 0 12z" fill="url(#edgeBase)" />
        <path d="M0 11.500C.6 4.500 6 0 12 0c7 0 12 4.800 12 9.500 0 4-3 6.300-6.500 6.300-3 0-4.800-1.200-3.800-2.300C15.500 11.500 13 6.300 8 6.300c-4 0-7.500 2.500-8 5.200z" fill="url(#edgeTop)" />
        <path d="M9 9.500c-4 3-2.500 10.500 3 14.500C5 21.500 3 13 9 9.500z" fill="#0a6ec0" />
      </svg>
    ),
  },
  {
    label: "WPS",
    icon: (
      <svg width="24" height="24" viewBox="0 0 24 24">
        <defs>
          <linearGradient id="wps" x1="0" x2="1" y2="1">
            <stop stopColor="#8f35ea" />
            <stop offset=".6" stopColor="#e8328f" />
            <stop offset="1" stopColor="#ff5a2e" />
          </linearGradient>
        </defs>
        <circle cx="12" cy="12" r="12" fill="url(#wps)" />
        <path d="M5 8h2.500l2 8.500L13 9l2 7.500L18 10M16.500 6h5M19 3.500v5" fill="none" stroke="#fff" strokeWidth="1.700" strokeLinejoin="round" />
      </svg>
    ),
  },
  {
    label: "Chrome, work profile",
    running: true,
    active: true,
    icon: (
      <ChromeWrap>
        <Chrome />
        <ChromeUser $bg="#c5391a">E</ChromeUser>
      </ChromeWrap>
    ),
  },
  {
    label: "Surfshark",
    running: true,
    icon: (
      <svg width="20" height="24" viewBox="0 0 20 24">
        <path d="M5 0h10c3 0 5 2 5 5 0 12-6 19-13 19-3 0-7-1-7-4C0 13 2 4 5 0z" fill="#148a94" />
        <path d="M14 6c-4 0-3.500 3-3.500 6S9.500 17 6 17" fill="none" stroke="#fff" strokeWidth="2.300" />
      </svg>
    ),
  },
  {
    label: "Notepad",
    running: true,
    icon: (
      <svg width="24" height="22" viewBox="0 0 24 22">
        <path d="M8 1h14l2 18-4 2z" fill="#c9ccc9" />
        <path d="M7 1h13l-2 20H0z" fill="#8fc9d4" />
        <path d="M8 4h11l-1 16-12-1z" fill="#4c9cab" opacity=".6" />
        <path d="M7 1h13" stroke="#eef" strokeWidth="2" />
      </svg>
    ),
  },
];

export default function App() {
  return (
    <Desktop>
      <GlobalStyle />
      <TabStrip>
        <TabSearch aria-label="Search tabs">
          <Chevron color="#33260f" w={3.5} s={9} />
        </TabSearch>
        <Tabs>
          {tabs.map((t) => (
            <Tab key={t.title} $line={t.line}>
              {t.icon}
              <TabTitle>{t.title}</TabTitle>
            </Tab>
          ))}
          <Tab $active>
            <FunnelMark w={10} h={16} />
            <Icon s={9} w={3.5} color="#33260f">
              <path d="M2 2l16 16M18 2L2 18" />
            </Icon>
          </Tab>
          <Tab $line>
            <FunnelMark w={16} h={16} />
            <svg width="13" height="13" viewBox="0 0 13 13" aria-hidden="true">
              <path d="M1 1.500h11v8H6L3.500 12V9.500H1z" fill="#fff" stroke="#4a3413" />
              <path d="M3.500 5.500h6" stroke="#4a3413" strokeWidth="1.500" strokeDasharray="1.500 .8" />
            </svg>
          </Tab>
          {tabsAfter.map((t, i) => (
            <Tab key={i} $line>
              {t.icon}
              <TabTitle>{t.title}</TabTitle>
            </Tab>
          ))}
        </Tabs>
        <StripButton $w={34} aria-label="New tab">
          <Icon s={12} w={2.8} color="#33260f">
            <path d="M10 1v18M1 10h18" />
          </Icon>
        </StripButton>
        <WindowControls>
          <StripButton $w={46} aria-label="Minimize">
            <Icon s={10} w={2} color="#111"><path d="M0 10h20" /></Icon>
          </StripButton>
          <StripButton $w={46} aria-label="Restore">
            <Icon s={11} w={2} color="#111"><path d="M1 5h14v14H1zM5 5V1h14v14h-4" /></Icon>
          </StripButton>
          <StripButton $w={46} aria-label="Close">
            <Icon s={11} w={2} color="#111"><path d="M1 1l18 18M19 1L1 19" /></Icon>
          </StripButton>
        </WindowControls>
      </TabStrip>

      <ToolbarBack>
        <Toolbar>
          <ToolButton aria-label="Back">
            <Icon s={14} w={2.5} color="#2b2418"><path d="M19 10H2M9.500 2L1.500 10l8 8" /></Icon>
          </ToolButton>
          <ToolButton aria-label="Forward">
            <Icon s={14} w={2.3} color="#a58e70"><path d="M1 10h17M10.500 2l8 8-8 8" /></Icon>
          </ToolButton>
          <ToolButton aria-label="Reload">
            <Icon s={14} w={2.5} color="#2b2418"><path d="M18 10.500a8 8 0 1 1-2.400-6.200L18 6.700M18.300 1v6h-6" /></Icon>
          </ToolButton>
          <Omnibox>
            <SiteInfo aria-label="Site information">
              <Icon s={14} w={2} color="#3a3021">
                <circle cx="4" cy="5.500" r="2.200" />
                <path d="M10 5.500h8M2 14.500h8" />
                <circle cx="16" cy="14.500" r="2.200" />
              </Icon>
            </SiteInfo>
            <Url>app.lightfunnels.com<span>/admin</span></Url>
            <Icon s={16} w={1.7} color="#4c4a52">
              <path d="M10 1.500l2.500 5.800 6.300.6-4.800 4.200 1.400 6.200-5.400-3.300-5.400 3.300L6 12.100 1.200 7.900l6.300-.6z" />
            </Icon>
          </Omnibox>
          {extensions.map((e) => (
            <ToolButton key={e.label} aria-label={e.label}>{e.icon}</ToolButton>
          ))}
          <ToolDivider />
          <ToolButton aria-label="Side panel">
            <svg width="15" height="14" viewBox="0 0 15 14">
              <rect x="1" y="1" width="13" height="12" fill="none" stroke="#2b2620" strokeWidth="2" />
              <rect x="9" y="1" width="5" height="12" fill="#2b2620" />
            </svg>
          </ToolButton>
          <ToolButton aria-label="Profile">
            <Initial $size={20} $bg="#bf360c">E</Initial>
          </ToolButton>
          <Relaunch>
            Relaunch to update
            <svg width="4" height="14" viewBox="0 0 4 14" fill="#33260f">
              <circle cx="2" cy="2" r="1.600" />
              <circle cx="2" cy="7" r="1.600" />
              <circle cx="2" cy="12" r="1.600" />
            </svg>
          </Relaunch>
        </Toolbar>
      </ToolbarBack>

      <Header>
        <Logo href="#">
          <FunnelMark w={25} h={39} />
          lightfunnels
        </Logo>
        <SearchBox>
          <Icon s={17} w={1.7} color="#8d97a8">
            <circle cx="9" cy="9" r="7.700" />
            <path d="M14.800 14.800L19 19" />
          </Icon>
          <input type="search" placeholder="Search" aria-label="Search" />
        </SearchBox>
        <HeaderRight>
          <AnnounceButton aria-label="Announcements">
            <Icon s={18} w={1.5}>
              <path d="M11.500 2L16 14l-9.500-.8-2.700 1c-1.700.3-3.500-3.300-2-4.500l3-1.400zM5 8.500l1.800 4.700M5 14.500L6.500 19l2.600-.8-1-4.700M15 5.500c1.500.2 2 2 1 3M16 1.800l.8-1M18.300 4.500l1.200-.3" />
            </Icon>
          </AnnounceButton>
          <AccountButton>
            <Initial $size={28} $bg="#fdc80f">A</Initial>
            Amr Mohamed
            <Chevron s={9} w={2.8} />
          </AccountButton>
          <HeaderDivider />
          <AvatarWrap>
            <svg width="38" height="38" viewBox="0 0 38 38" aria-hidden="true">
              <circle cx="19" cy="19" r="18.500" fill="#1b75b0" />
              <path d="M19 7v12M26 11a11 11 0 1 1-15 1.500" fill="none" stroke="#fff" strokeWidth="5" strokeLinecap="round" />
            </svg>
            <AvatarBadge>6</AvatarBadge>
          </AvatarWrap>
          <Person>
            <PersonName>amr Moham...</PersonName>
            <PersonPlan href="#">6 Figures seller</PersonPlan>
          </Person>
        </HeaderRight>
      </Header>

      <Body>
        <Sidebar>
          <nav>
            {navItems.map((n, i) => (
              <NavLink key={n.label} href="#" $active={i === 0}>
                <Icon>{n.icon}</Icon>
                <Label>{n.label}</Label>
              </NavLink>
            ))}
            <NavRule />
            <NavLink href="#">
              <Icon>
                <path d={gear} />
                <circle cx="10" cy="10.300" r="3" />
              </Icon>
              <Label>Settings</Label>
            </NavLink>
          </nav>
          <PlanCard>
            <PlanRow>
              <Digit $color="#4db2ee">6</Digit>
              Figures seller
            </PlanRow>
            <PlanRule />
            <PlanRow>
              <span>Road to:</span>
              <Digit $color="#35cf93" $left={3}>7</Digit>
              Figures seller
            </PlanRow>
            <Meter>
              <MeterFill style={{ width: "16%" }} />
            </Meter>
            <PlanFoot>
              <span>$164.7k / $1m</span>
              <span>16%</span>
            </PlanFoot>
          </PlanCard>
        </Sidebar>

        <Main>
          <TitleRow>
            <h1>Overview</h1>
            <RefreshButton>
              <Icon s={23} w={1.2}>
                <path d="M1.500 8.500A8.500 8.500 0 0 1 5 3M8 1.600a8.500 8.500 0 0 1 9.500 4M18 2v4h-4M18.500 11.500A8.500 8.500 0 0 1 15 17M12 18.400a8.500 8.500 0 0 1-9.500-4M2 18v-4h4M1.500 8.500L.5 7M18.500 11.500l1 1.500" />
              </Icon>
              Refresh
            </RefreshButton>
            <StorePicker>
              <select aria-label="Select Funnel/Store" defaultValue="all">
                <option value="all">Select Funnel/Store</option>
              </select>
              <Chevron s={12} w={1.8} color="#7d8b9c" />
            </StorePicker>
            <DateButton>
              <Icon s={18} w={1.4}>
                <path d="M1.500 3h17v15h-17zM1.500 7.500h17M6 1v4M14 1v4" />
              </Icon>
              01 - 31 Dec 2023
            </DateButton>
          </TitleRow>

          <ViewTabs>
            <ViewTab $active>
              <Icon><Coin /></Icon>
              SALES
            </ViewTab>
            <ViewTab>
              <Icon><People /></Icon>
              LEADS
            </ViewTab>
          </ViewTabs>

          <IntroRow>
            <div>
              <IntroTitle>Account overview</IntroTitle>
              <Greeting>
                <svg width="20" height="20" viewBox="0 0 20 20" aria-hidden="true">
                  <g stroke="#fbc53a" strokeWidth="2.800" strokeLinecap="round">
                    <path d="M10 12L3.500 5.500M12 10L5.500 3M14 9L9 3M6 12L2.500 9M16 11l.5-6" />
                  </g>
                  <path d="M3.500 10.500L13 6.500l2 3 1.500-3.500c2 .5 2.500 3 2.500 6 0 4-3 7-7 6.500-3-.5-6-4.500-8.500-8z" fill="#fbbf30" />
                  <path d="M14 .8c2 .2 3 1.200 3.300 3.200M.8 14c.4 2.200 1.700 3.500 4 4" fill="none" stroke="#8b9aa8" />
                </svg>
                <strong>Hi amr</strong>
                <span>- here's what's happening with your account.</span>
              </Greeting>
            </div>
            <Currency>
              <CurrencyButton $active>SAR</CurrencyButton>
              <CurrencyButton>AED</CurrencyButton>
              <MoreButton aria-label="More currencies">
                <svg width="16" height="4" viewBox="0 0 16 4" fill="#5d6d82">
                  <circle cx="2" cy="2" r="1.800" />
                  <circle cx="8" cy="2" r="1.800" />
                  <circle cx="14" cy="2" r="1.800" />
                </svg>
              </MoreButton>
            </Currency>
          </IntroRow>

          <Board>
            <Column>
              {stats.map((row, i) => (
                <StatCard key={i}>
                  {row.map((s) => (
                    <Stat key={s.label}>
                      <StatHead $color={s.color}>
                        <StatIcon $bg={s.bg} $edge={s.edge}><Icon s={19}>{s.icon}</Icon></StatIcon>
                        <Label>{s.label}</Label>
                      </StatHead>
                      <StatValue>{s.value}</StatValue>
                    </Stat>
                  ))}
                </StatCard>
              ))}
              <Pair>
                <Card>
                  <CardTitle>TOTAL ORDERS</CardTitle>
                  <CardFigures><strong>1,887</strong>01 - 31 Dec 2023</CardFigures>
                </Card>
                <Card>
                  <CardTitle>TOTAL VISITORS</CardTitle>
                  <CardFigures><strong>25,743</strong>01 - 31 Dec 2023</CardFigures>
                </Card>
              </Pair>
            </Column>
            <Column>
              <Card>
                <CardTitle>TOTAL SALES</CardTitle>
                <CardFigures><strong>SAR599,471.49</strong>01 - 31 Dec 2023</CardFigures>
                <SalesChart />
              </Card>
              <Card>
                <CardTitle>CONVERSION RATE</CardTitle>
              </Card>
            </Column>
          </Board>
        </Main>
        <ScrollThumb />
        <HelpButton aria-label="Help">
          <Icon s={19} w={1.7}>
            <circle cx="10" cy="10" r="9" />
            <path d="M7.300 7.800c.2-3.400 5.700-3.200 5.500 0C12.700 9.800 10 9.700 10 12M10 14.700v.1" />
          </Icon>
        </HelpButton>
        <Watermark>
          <p>Activate Windows</p>
          <p>Go to Settings to activate Windows.</p>
        </Watermark>
      </Body>

      <Taskbar>
        <StartButton aria-label="Start">
          <svg width="16" height="16" viewBox="0 0 16 16" fill="#fff">
            <path d="M0 2.300l6.500-.9v6.200H0zM7.300 1.300L16 0v7.600H7.300zM0 8.400h6.500v6.200L0 13.700zM7.300 8.400H16V16l-8.700-1.300z" />
          </svg>
        </StartButton>
        <TaskSearch>
          <Icon s={17} w={1.5} color="#222">
            <circle cx="12.500" cy="7.500" r="6.500" />
            <path d="M8 12.200L1 19" />
          </Icon>
          <input type="text" placeholder="Type here to search" aria-label="Type here to search" />
        </TaskSearch>
        <TaskApps>
          {taskApps.map((a) => (
            <TaskButton key={a.label} aria-label={a.label} $running={a.running} $active={a.active}>
              {a.icon}
            </TaskButton>
          ))}
        </TaskApps>
        <Tray>
          <NewsButton>
            <svg width="24" height="22" viewBox="0 0 24 22" aria-hidden="true">
              <path d="M3 1c5-1 12-1 18 0l2 3-1 5-5 1v4c-3 1.500-8 1.500-10 0l-1-2-4-1-1-4 3-2z" fill="#f5a01d" />
              <path d="M5 5.500h15M8 10.500h8M9 14h6" stroke="#e08a12" strokeWidth=".8" />
              <path d="M8.500 17h7L12 22z" fill="#d9481c" />
            </svg>
            SAR...
          </NewsButton>
          <TrayIcon $w={22} aria-label="Show hidden icons">
            <Icon s={12} w={2}><path d="M1 14l9-9 9 9" /></Icon>
          </TrayIcon>
          <TrayIcon $w={26} aria-label="Cloud sync">
            <svg width="16" height="16" viewBox="0 0 16 16">
              <rect width="16" height="16" rx="2" fill="#fff" />
              <path d="M4.500 12h7.500c3 0 2.500-4.500 0-4.500C11.500 3 5.500 3 5 7 1 7 1.500 12 4.500 12zM6 10l3-3 3 4" fill="none" stroke="#3b86d8" strokeWidth="1.300" />
            </svg>
          </TrayIcon>
          <TrayIcon aria-label="Meet now">
            <Icon s={16} w={1.6}>
              <rect x="4" y="5" width="9" height="10" rx="2" />
              <path d="M13 8.500l3-1.500v6l-3-1.500M5 1.500c3-1 6-1 9 0M5 18.500c3 1 6 1 9 0" />
            </Icon>
          </TrayIcon>
          <TrayIcon aria-label="OneDrive">
            <svg width="16" height="11" viewBox="0 0 16 11">
              <path d="M3.500 11C0 11-.5 6.500 2.500 6 3 1.500 8-1 10.500 3c3-.5 4.500 1.500 4 3.500 2 1 1.500 4.500-1 4.500z" fill="#e4e4e4" />
            </svg>
          </TrayIcon>
          <TrayIcon aria-label="Battery">
            <svg width="16" height="10" viewBox="0 0 16 10">
              <rect x=".5" y="1" width="13" height="8" fill="none" stroke="#fff" />
              <rect x="2.500" y="3" width="9" height="4" fill="#fff" />
              <path d="M15 3.500v3" stroke="#fff" strokeWidth="1.500" />
            </svg>
          </TrayIcon>
          <TrayIcon aria-label="Volume">
            <Icon s={16} w={1.4}>
              <path d="M1 7.500h3.500L9 3v14l-4.500-4.500H1zM12 7.500c1.300 1.500 1.300 3.500 0 5M14.500 5c2.700 3 2.700 7 0 10M17 3c3.500 4 3.500 10 0 14" />
            </Icon>
          </TrayIcon>
          <TrayIcon $w={28} aria-label="Wi-Fi">
            <Icon s={13} w={1.7}>
              <path d="M1 18C1.500 9 9 1.500 19 2M5.500 18C6 11.500 11.500 6.500 19 6.500M10 18c.5-4 4.500-7 9-7M14.500 18c.5-1.500 2-2.500 4.500-2.500" />
            </Icon>
          </TrayIcon>
          <TrayIcon $w={28}>ENG</TrayIcon>
          <Clock>
            12:43 PM
            <br />
            12/31/2023
          </Clock>
          <TrayIcon $w={42} aria-label="Notifications">
            <svg width="30" height="24" viewBox="0 0 30 24">
              <path d="M1 3h16v12H7l-3 3v-3H1z" fill="#fff" />
              <path d="M4 6.500h10M4 9.500h10M4 12.500h6" stroke="#1d1d1d" />
              <circle cx="16.500" cy="15.500" r="7.500" fill="#3a3a3a" stroke="#777" />
              <text x="16.500" y="19.500" fontSize="11" textAnchor="middle" fill="#fff" fontFamily="Open Sans">2</text>
            </svg>
          </TrayIcon>
          <ShowDesktop />
        </Tray>
      </Taskbar>
    </Desktop>
  );
}
